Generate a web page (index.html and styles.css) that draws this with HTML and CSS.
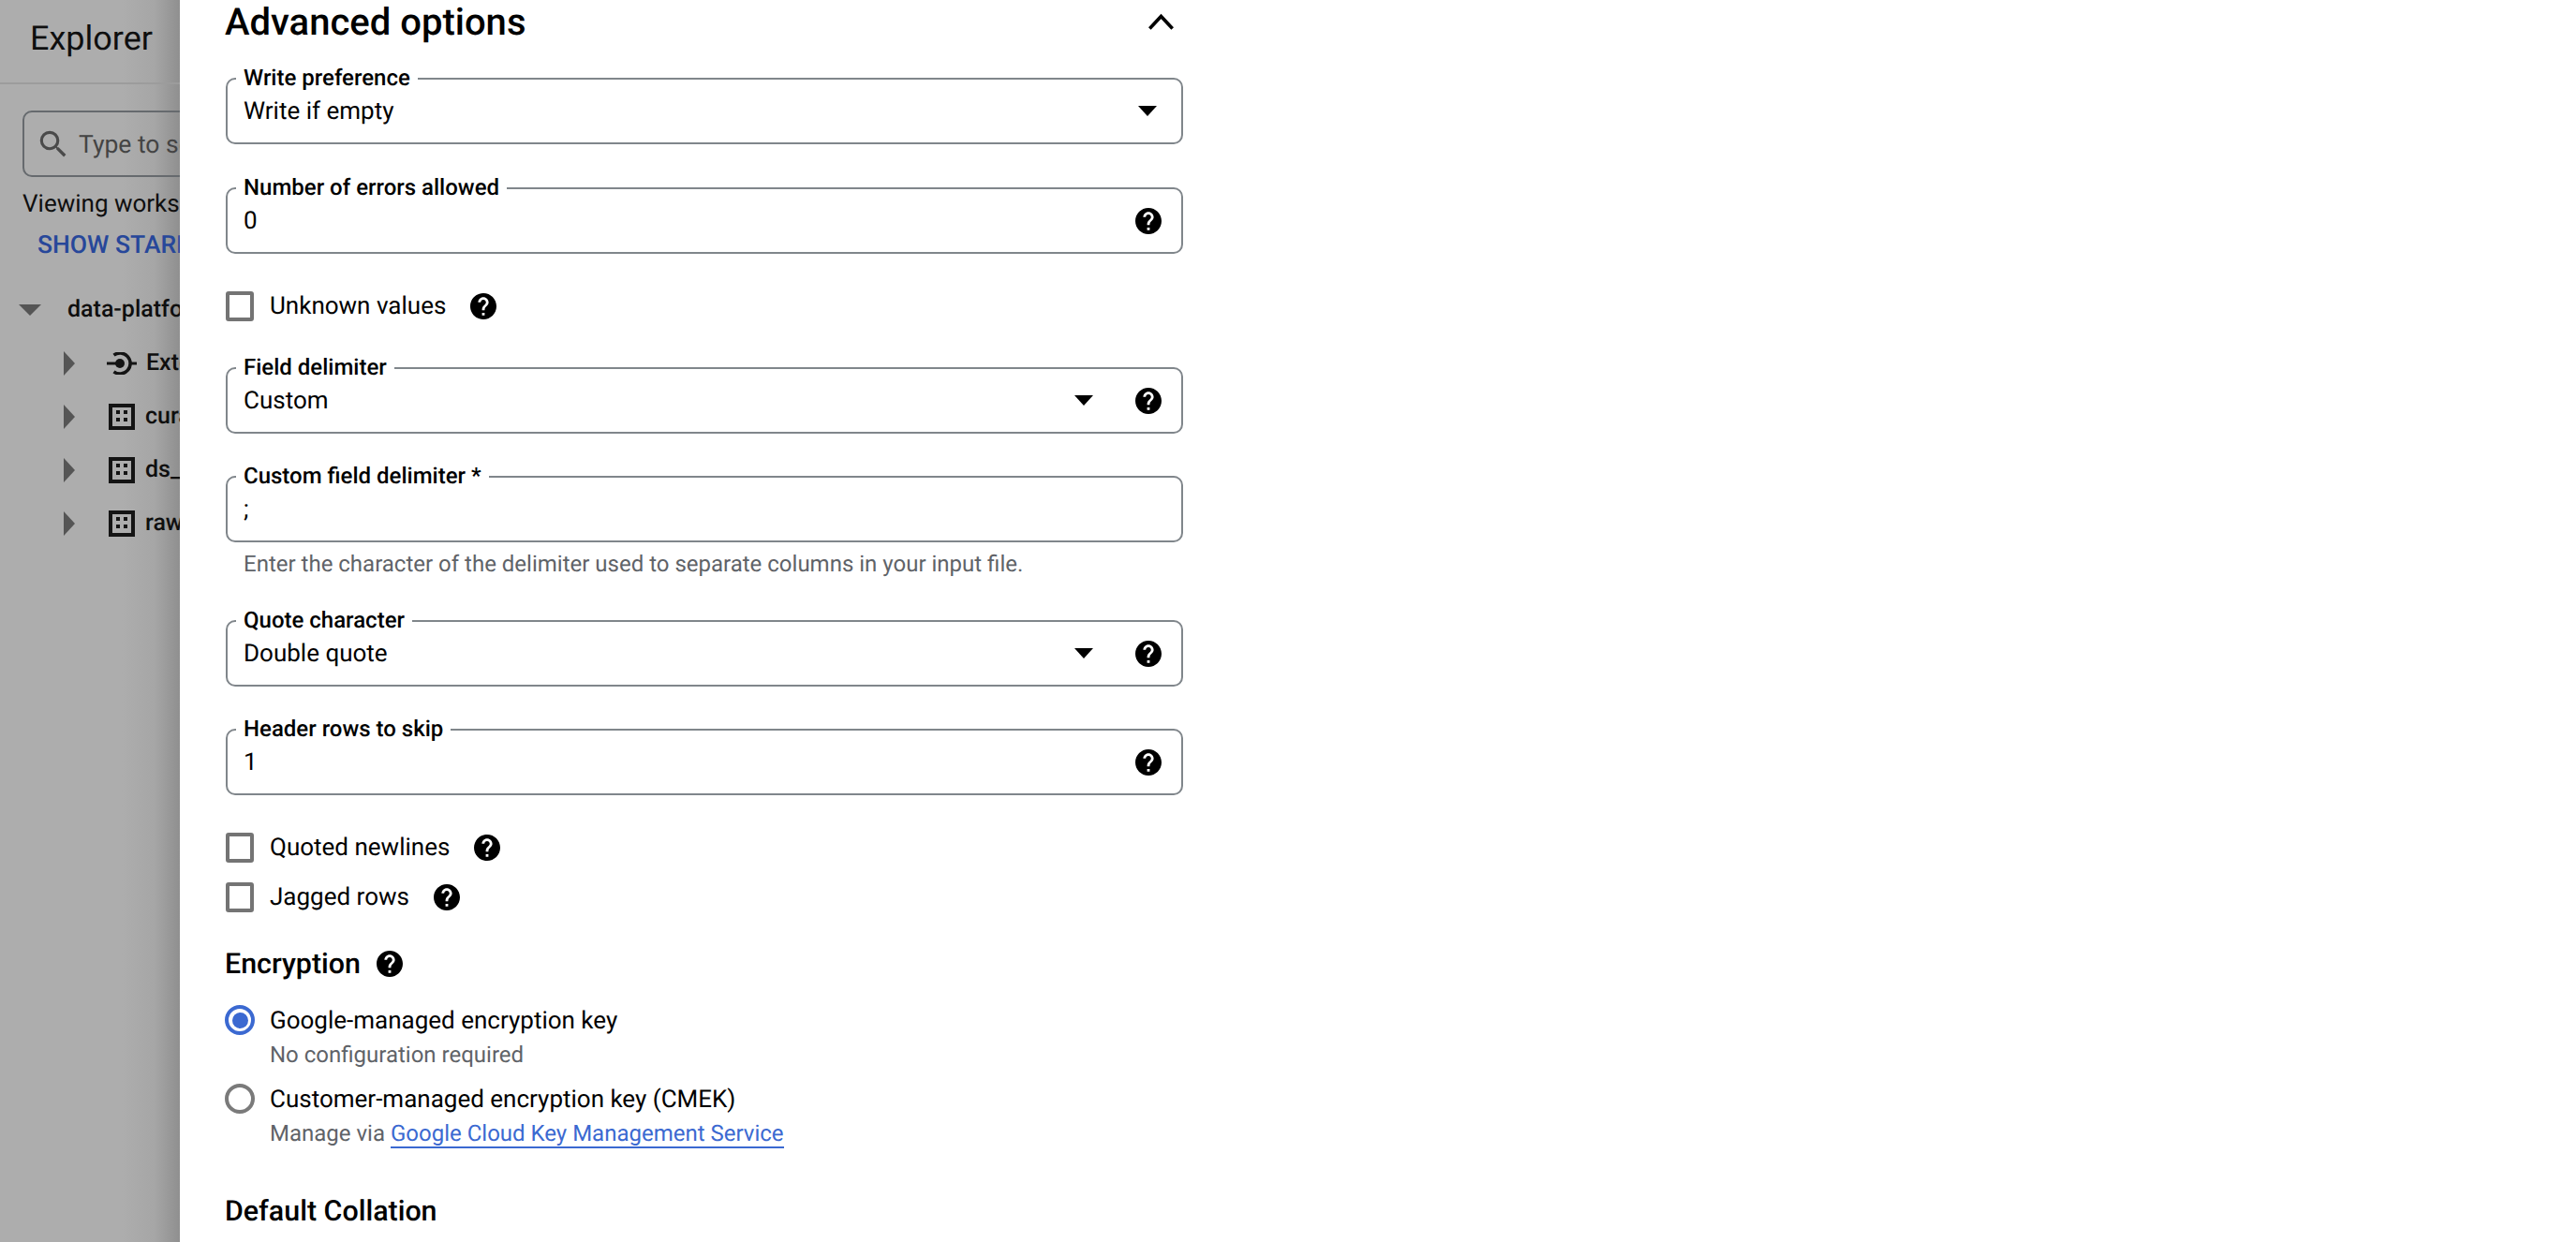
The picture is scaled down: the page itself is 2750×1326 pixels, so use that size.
FILE: index.html
```html
<!DOCTYPE html>
<html lang="en">
<head>
<meta charset="utf-8">
<title>Advanced options</title>
<link rel="stylesheet" href="styles.css">
</head>
<body>
<svg class="defs" width="0" height="0" aria-hidden="true">
  <symbol id="help" viewBox="2 2 20 20"><path d="M12 2C6.48 2 2 6.48 2 12s4.48 10 10 10 10-4.48 10-10S17.52 2 12 2zm1 17h-2v-2h2v2zm2.07-7.75l-.9.92C13.45 12.9 13 13.5 13 15h-2v-.5c0-1.1.45-2.1 1.17-2.83l1.24-1.26c.37-.36.59-.86.59-1.41 0-1.1-.9-2-2-2s-2 .9-2 2H8c0-2.21 1.79-4 4-4s4 1.79 4 4c0 .88-.36 1.680-.93 2.250z"/></symbol>
  <symbol id="dataset" viewBox="0 0 28 28"><path fill-rule="evenodd" d="M0 0h28v28H0zM4 4v20h20V4z"/><path d="M8 7h4v4H8zM16 7h4v4h-4zM8 15h4v4H8zM16 15h4v4h-4z"/></symbol>
</svg>
<div class="page">
  <aside class="explorer">
    <div class="explorer-head">Explorer</div>
    <div class="search">
      <svg class="search-icon" viewBox="0 0 24 24"><path d="M15.500 14h-.79l-.28-.27A6.470 6.470 0 0 0 16 9.500 6.500 6.500 0 1 0 9.500 16c1.610 0 3.090-.59 4.230-1.570l.27.28v.79l5 4.990L20.490 19l-4.990-5zm-6 0C7.010 14 5 11.990 5 9.500S7.010 5 9.500 5 14 7.010 14 9.500 11.990 14 9.500 14z"/></svg>
      <span class="search-text">Type to search</span>
    </div>
    <div class="viewing">Viewing workspace resources.</div>
    <div class="show-starred">SHOW STARRED ONLY</div>
    <div class="tree-root"><i class="arrow-down"></i><span>data-platform</span></div>
    <div class="tree-row"><i class="arrow-right"></i>
      <svg class="node-icon" viewBox="0 0 32 24" fill="none" stroke="#141414" stroke-width="3"><path d="M0 12h14M25 12h7"/><path stroke-width="3.500" d="M7.500 3.200A11 11 0 1 1 7.500 20.800"/><circle cx="14" cy="12" r="5" fill="#141414" stroke="none"/></svg>
      <span class="ext-text">External connections</span></div>
    <div class="tree-row"><i class="arrow-right"></i><svg class="node-icon dataset-icon"><use href="#dataset"/></svg><span>curated</span></div>
    <div class="tree-row"><i class="arrow-right"></i><svg class="node-icon dataset-icon"><use href="#dataset"/></svg><span>ds_staging</span></div>
    <div class="tree-row"><i class="arrow-right"></i><svg class="node-icon dataset-icon"><use href="#dataset"/></svg><span>raw_data</span></div>
  </aside>

  <main class="panel">
    <form class="form">
      <div class="title-row">
        <h2 class="title">Advanced options</h2>
        <svg class="chevron" viewBox="0 0 27 18" fill="none" stroke="#000" stroke-width="3.600"><path d="M1.300 16.500 13.500 3.500l12.200 13"/></svg>
      </div>

      <div class="field first">
        <label class="field-label">Write preference</label>
        <span class="field-value">Write if empty</span>
        <i class="caret caret-solo"></i>
      </div>

      <div class="field">
        <label class="field-label">Number of errors allowed</label>
        <span class="field-value">0</span>
        <svg class="help"><use href="#help"/></svg>
      </div>

      <div class="check-row unknown">
        <i class="checkbox"></i><span>Unknown values</span><svg class="help"><use href="#help"/></svg>
      </div>

      <div class="field after-check">
        <label class="field-label">Field delimiter</label>
        <span class="field-value">Custom</span>
        <i class="caret"></i>
        <svg class="help"><use href="#help"/></svg>
      </div>

      <div class="field tight">
        <label class="field-label">Custom field delimiter *</label>
        <span class="field-value">;</span>
      </div>
      <p class="hint">Enter the character of the delimiter used to separate columns in your input file.</p>

      <div class="field after-hint">
        <label class="field-label">Quote character</label>
        <span class="field-value">Double quote</span>
        <i class="caret"></i>
        <svg class="help"><use href="#help"/></svg>
      </div>

      <div class="field tight">
        <label class="field-label">Header rows to skip</label>
        <span class="field-value">1</span>
        <svg class="help"><use href="#help"/></svg>
      </div>

      <div class="check-row quoted">
        <i class="checkbox"></i><span>Quoted newlines</span><svg class="help"><use href="#help"/></svg>
      </div>
      <div class="check-row jagged">
        <i class="checkbox"></i><span>Jagged rows</span><svg class="help"><use href="#help"/></svg>
      </div>

      <div class="section-row encryption">
        <h3 class="section-title">Encryption</h3><svg class="help"><use href="#help"/></svg>
      </div>

      <div class="radio-row first-radio">
        <i class="radio radio-on"></i><span>Google-managed encryption key</span>
      </div>
      <p class="radio-sub">No configuration required</p>
      <div class="radio-row second-radio">
        <i class="radio"></i><span>Customer-managed encryption key (CMEK)</span>
      </div>
      <p class="radio-sub">Manage via <a class="link" href="#">Google Cloud Key Management Service</a></p>

      <h3 class="section-title collation">Default Collation</h3>
    </form>
  </main>
</div>
</body>
</html>
```
FILE: styles.css
```css
* { box-sizing: border-box; }
html, body { margin: 0; height: 100%; overflow: hidden; }
body { font-family: Roboto, "Liberation Sans", sans-serif; color: #000; background: #fff; text-rendering: geometricPrecision; }
.defs { position: absolute; }
.page { display: flex; height: 1326px; }

/* dimmed explorer */
.explorer {
  width: 192px; flex: none; overflow: hidden; white-space: nowrap;
  background: linear-gradient(to right, #adadad 0, #adadad 130px, #a6a6a6 165px, #8f8f8f 192px);
  color: #0f0f0f; font-size: 25px;
}
.explorer-head { height: 90px; padding: 20px 0 0 32px; font-size: 36px; line-height: 42px; border-bottom: 2px solid #9c9c9c; }
.search {
  display: flex; align-items: center; gap: 9px; width: 300px; height: 71px; margin: 28px 0 0 24px; padding-left: 12px;
  border: 2px solid #666a6e; border-radius: 10px; color: #444; font-size: 26.500px;
}
.search-icon { width: 38px; height: 38px; fill: #4a4a4a; flex: none; }
.search-text { padding-top: 2px; margin-left: -1px; }
.viewing { margin: 13px 0 0 24px; line-height: 32px; font-size: 26px; }
.show-starred { margin: 12px 0 0 40px; line-height: 32px; font-size: 26.500px; font-weight: 500; color: #27479a; }
.tree-root { display: flex; align-items: center; height: 57px; margin-top: 24px; font-weight: 500; }
.tree-root span { margin-left: 28px; }
.arrow-down { width: 0; height: 0; margin-left: 20px; border: solid transparent; border-width: 12px 12px 0; border-top-color: #555; }
.tree-row { display: flex; align-items: center; height: 57px; font-weight: 500; }
.arrow-right { width: 0; height: 0; margin-left: 68px; border: solid transparent; border-width: 13px 0 13px 12px; border-left-color: #555; }
.node-icon { width: 32px; height: 24px; margin-left: 34px; flex: none; }
.dataset-icon { width: 28px; height: 28px; margin-left: 36px; fill: #141414; }
.tree-row span { margin-left: 11px; }
.tree-row .ext-text { margin-left: 10px; }

/* panel */
.panel { flex: 1; background: #fff; padding-left: 49px; overflow: hidden; }
.form { width: 1022px; font-size: 26px; }
.title-row { display: flex; justify-content: space-between; align-items: center; height: 46px; padding-right: 10px; }
.title { margin: 1px 0 0 -1px; font-size: 40px; font-weight: 500; line-height: 46px; }
.chevron { width: 27px; height: 18px; }

.field {
  position: relative; display: flex; align-items: center; height: 71px; margin-top: 46px; padding: 0 21px 0 17px;
  border: 2px solid #80868b; border-radius: 10px;
}
.field.first { margin-top: 37px; }
.field.after-check { margin-top: 49px; }
.field.tight { margin-top: 45px; }
.field.after-hint { margin-top: 44px; }
.field-label {
  position: absolute; left: 9px; top: -17px; padding: 0 8px; background: #fff;
  font-size: 24px; line-height: 30px; font-weight: 500;
}
.field-value { flex: 1; line-height: 30px; }
.help { width: 28px; height: 28px; flex: none; fill: #000; }
.caret { width: 0; height: 0; margin-right: 45px; border: solid transparent; border-width: 11px 10.500px 0; border-top-color: #000; }
.caret-solo { margin-right: 5px; }

.hint { margin: 7px 0 0 19px; font-size: 24px; line-height: 32px; color: #5f6368; }

.check-row { display: flex; align-items: center; height: 32px; }
.check-row span { margin: 0 26px 0 17px; }
.unknown { margin-top: 40px; }
.quoted { margin-top: 40px; }
.jagged { margin-top: 21px; }
.checkbox { width: 30px; height: 32px; border: 4px solid #747474; border-radius: 3px; flex: none; }

.section-row { display: flex; align-items: center; gap: 17px; height: 40px; }
.section-row .section-title { margin-top: 2px; }
.encryption { margin-top: 35px; }
.section-title { margin: 0 0 0 -1px; font-size: 30.400px; line-height: 40px; font-weight: 500; }

.radio-row { display: flex; align-items: center; height: 32px; }
.radio-row span { margin-left: 16px; padding-top: 2px; }
.first-radio { margin-top: 24px; }
.second-radio { margin-top: 15px; }
.radio { position: relative; width: 32px; height: 32px; border: 4px solid #7a7a7a; border-radius: 50%; flex: none; margin-left: -1px; }
.radio-on { border-color: #3b69d1; }
.radio-on::after { content: ""; position: absolute; inset: 3.500px; border-radius: 50%; background: #3b69d1; }
.radio-sub { margin: 5px 0 0 47px; font-size: 24px; line-height: 32px; color: #5f6368; }
.link { color: #3b69d1; text-decoration: none; border-bottom: 2px solid #3b69d1; }
.section-title.collation { margin-top: 48px; }
```
